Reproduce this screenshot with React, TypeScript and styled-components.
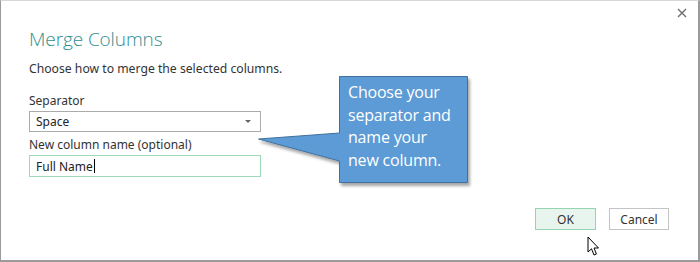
import React from "react";
import styled, { createGlobalStyle } from "styled-components";

const GlobalStyle = createGlobalStyle`
  html, body {
    margin: 0;
    padding: 0;
    background: #ffffff;
  }
  body {
    font-family: "Noto Sans", "Open Sans", sans-serif;
    color: #333333;
  }
`;

const Dialog = styled.div`
  position: relative;
  box-sizing: border-box;
  width: 700px;
  height: 262px;
  border-left: 1px solid #9a9a9a;
  border-top: 1px solid #d8d8d8;
  border-right: 2px solid #9a9a9a;
  border-bottom: 2px solid #9a9a9a;
  padding: 0 0 0 28px;
  display: flex;
  flex-direction: column;
  overflow: hidden;
`;

const CloseButton = styled.div`
  position: absolute;
  top: 6px;
  right: 10px;
  width: 12px;
  height: 12px;
  display: flex;
  align-items: center;
  justify-content: center;
`;

const Title = styled.h1`
  margin: 25px 0 0 0;
  font-family: "Open Sans", "Noto Sans", sans-serif;
  font-weight: 300;
  font-size: 19px;
  line-height: 26px;
  color: #2f8f8f;
  letter-spacing: -0.1px;
`;

const Subtitle = styled.p`
  margin: 8px 0 0 0;
  font-size: 12.2px;
  line-height: 18px;
  color: #333333;
`;

const Field = styled.div<{ $gap: number }>`
  margin-top: ${(p) => p.$gap}px;
  display: flex;
  flex-direction: column;
  width: 232px;
`;

const Label = styled.label`
  font-size: 12px;
  line-height: 14px;
  color: #333333;
  margin-bottom: 3px;
`;

const Select = styled.div`
  box-sizing: border-box;
  height: 21px;
  border: 1px solid #ababab;
  display: flex;
  align-items: center;
  justify-content: space-between;
  padding: 0 9px 0 6px;
  font-size: 12px;
  color: #222222;
`;

const Caret = styled.span`
  width: 0;
  height: 0;
  border-left: 3px solid transparent;
  border-right: 3px solid transparent;
  border-top: 3px solid #666666;
`;

const TextInput = styled.div`
  box-sizing: border-box;
  height: 22px;
  border: 1px solid #9fd8b8;
  display: flex;
  align-items: center;
  padding: 0 6px;
  font-size: 12px;
  color: #222222;
`;

const TextCursor = styled.span`
  display: inline-block;
  width: 1px;
  height: 14px;
  background: #000000;
  margin-left: 1px;
`;

const Footer = styled.div`
  margin-top: auto;
  margin-bottom: 30px;
  margin-right: 29px;
  display: flex;
  justify-content: flex-end;
  gap: 13px;
`;

const Button = styled.div<{ $primary?: boolean }>`
  box-sizing: border-box;
  width: ${(p) => (p.$primary ? 61 : 60)}px;
  height: 22px;
  display: flex;
  align-items: center;
  justify-content: center;
  font-size: 12px;
  color: #333333;
  background: ${(p) => (p.$primary ? "#e8f5ee" : "#ffffff")};
  border: 1px solid ${(p) => (p.$primary ? "#92d5b0" : "#c4c4c4")};
`;

const Callout = styled.div`
  position: absolute;
  left: 257px;
  top: 75px;
  width: 216px;
  height: 114px;
`;

const CalloutText = styled.div`
  position: absolute;
  left: 90px;
  top: 5px;
  font-family: "Open Sans", "Noto Sans", sans-serif;
  font-size: 16px;
  line-height: 22.7px;
  color: #ffffff;
  letter-spacing: -0.2px;
`;

const Pointer = styled.div`
  position: absolute;
  left: 586px;
  top: 235px;
  width: 14px;
  height: 22px;
`;

export default function App() {
  return (
    <>
      <GlobalStyle />
      <Dialog>
        <CloseButton>
          <svg width="10" height="10" viewBox="0 0 10 10">
            <path d="M1 1 L9 9 M9 1 L1 9" stroke="#6a6a6a" strokeWidth="1.3" />
          </svg>
        </CloseButton>
        <Title>Merge Columns</Title>
        <Subtitle>Choose how to merge the selected columns.</Subtitle>
        <Field $gap={16}>
          <Label>Separator</Label>
          <Select>
            <span>Space</span>
            <Caret />
          </Select>
        </Field>
        <Field $gap={6}>
          <Label>New column name (optional)</Label>
          <TextInput>
            Full Name
            <TextCursor />
          </TextInput>
        </Field>
        <Footer>
          <Button $primary>OK</Button>
          <Button>Cancel</Button>
        </Footer>
        <Callout>
          <svg width="216" height="114" viewBox="0 0 216 114">
            <defs>
              <filter id="sh" x="-10%" y="-10%" width="130%" height="130%">
                <feDropShadow dx="2" dy="3" stdDeviation="1.5" floodColor="#000" floodOpacity="0.35" />
              </filter>
            </defs>
            <path
              d="M81.5 0.5 H209.5 V106.5 H81.5 V85 L0.5 63 L81.5 57 Z"
              fill="#5b9bd5"
              stroke="#41719c"
              strokeWidth="1"
              filter="url(#sh)"
            />
          </svg>
          <CalloutText>
            Choose your
            <br />
            separator and
            <br />
            name your
            <br />
            new column.
          </CalloutText>
        </Callout>
        <Pointer>
          <svg width="14" height="22" viewBox="0 0 14 22">
            <path
              d="M1 1 L1 16 L4.5 12.8 L7 19 L9.4 18 L7 12 L11.5 12 Z"
              fill="#ffffff"
              stroke="#000000"
              strokeWidth="1"
              strokeLinejoin="round"
            />
          </svg>
        </Pointer>
      </Dialog>
    </>
  );
}
